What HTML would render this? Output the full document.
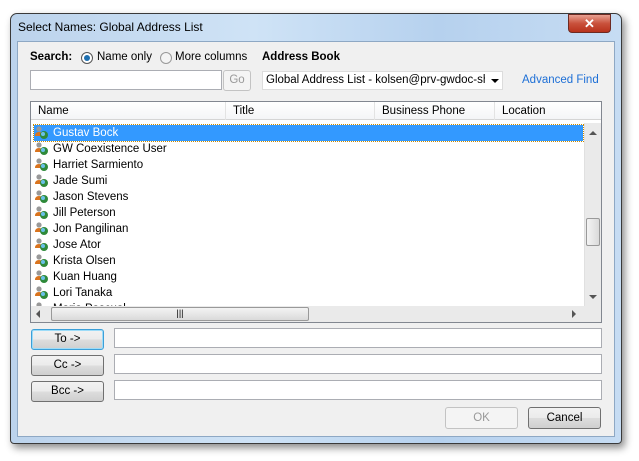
<!DOCTYPE html><html><head><style>
*{margin:0;padding:0;box-sizing:border-box}
body{width:639px;height:461px;background:#fff;font-family:"Liberation Sans",sans-serif;font-size:11.5px;color:#000;position:relative;overflow:hidden}
.a{position:absolute}
.win{left:10px;top:13px;width:612px;height:431px;border:1px solid #3a3a3a;border-radius:7px 7px 4px 4px;background:linear-gradient(90deg,#bcd3ec,#cfe3f6 40%,#b6d1ee 70%,#c6dcf3);box-shadow:3px 4px 8px rgba(0,0,0,.45)}
.client{left:17px;top:41px;width:598px;height:396px;background:#f0f0f0;border:1px solid #8ea8c4}
.tb{border:1px solid #abadb3;background:#fff}
.btn{border:1px solid #707070;border-radius:3px;background:linear-gradient(#f2f2f2,#ebebeb 50%,#dddddd 51%,#cfcfcf);text-align:center;line-height:19px}
.row{position:absolute;left:3px;height:16px;line-height:16px;padding-left:19px;width:548px}
.sel{background:#3399ff;color:#fff;outline:1px dotted #c98b00}
.hd{position:absolute;top:0;height:18px;line-height:18px;padding-left:7px;border-right:1px solid #e3e3e3}
</style></head><body>
<div class="a win"></div>
<div class="a" style="left:18px;top:20px;font-size:12px">Select Names: Global Address List</div>
<div class="a" style="left:568px;top:14px;width:43px;height:19px;border:1px solid #6d2a22;border-radius:0 0 4px 4px;background:linear-gradient(#e8a091,#c9513c 50%,#b8321c);color:#fff;text-align:center;font-weight:bold;font-size:13px;line-height:17px">✕</div>
<div class="a client"></div>
<div class="a" style="left:30px;top:51px;font-weight:bold">Search:</div>
<div class="a" style="left:81px;top:52px;width:12px;height:12px;border:1px solid #555;border-radius:50%;background:#fff"><div style="margin:2px;width:6px;height:6px;border-radius:50%;background:#1e6fb0"></div></div>
<div class="a" style="left:97px;top:51px">Name only</div>
<div class="a" style="left:160px;top:52px;width:12px;height:12px;border:1px solid #999;border-radius:50%;background:#f4f4f4"></div>
<div class="a" style="left:175px;top:51px">More columns</div>
<div class="a" style="left:262px;top:51px;font-weight:bold">Address Book</div>
<div class="a tb" style="left:30px;top:70px;width:192px;height:20px"></div>
<div class="a" style="left:223px;top:70px;width:28px;height:21px;border:1px solid #c3c3c3;border-radius:3px;background:#f4f4f4;color:#999;text-align:center;line-height:19px">Go</div>
<div class="a" style="left:262px;top:71px;width:241px;height:19px;border:1px solid #dcdcdc;background:#fff"><div style="width:222px;line-height:17px;padding-left:3px;white-space:nowrap;overflow:hidden">Global Address List - kolsen@prv-gwdoc-share</div></div>
<div class="a" style="left:491px;top:79px;width:0;height:0;border-left:4px solid transparent;border-right:4px solid transparent;border-top:4px solid #000"></div>
<div class="a" style="left:522px;top:74px;color:#1d6fd6">Advanced Find</div>
<div class="a" style="left:30px;top:101px;width:572px;height:222px;border:1px solid #828790;background:#fff;overflow:hidden">
<div class="a" style="left:0;top:0;width:570px;height:18px;background:linear-gradient(#fff,#f4f5f7);border-bottom:1px solid #d5d5d5">
<div class="hd" style="left:0;width:195px">Name</div><div class="hd" style="left:195px;width:149px">Title</div><div class="hd" style="left:344px;width:120px">Business Phone</div><div class="hd" style="left:464px;width:106px;border:0">Location</div></div>
<div class="row sel" style="top:23px;width:549px">Gustav Bock</div>
<div class="row" style="top:39px">GW Coexistence User</div>
<div class="row" style="top:55px">Harriet Sarmiento</div>
<div class="row" style="top:71px">Jade Sumi</div>
<div class="row" style="top:87px">Jason Stevens</div>
<div class="row" style="top:103px">Jill Peterson</div>
<div class="row" style="top:119px">Jon Pangilinan</div>
<div class="row" style="top:135px">Jose Ator</div>
<div class="row" style="top:151px">Krista Olsen</div>
<div class="row" style="top:167px">Kuan Huang</div>
<div class="row" style="top:183px">Lori Tanaka</div>
<div class="row" style="top:199px">Maria Pascual</div>
<svg class="a" style="left:3px;top:23px" width="16" height="181">
<g id="p"><circle cx="5" cy="4" r="2.6" fill="#999"/><path d="M1 11 Q1 7 5 7 Q9 7 9 11Z" fill="#d9741f"/><circle cx="10" cy="10" r="4" fill="#2f8a3a"/><circle cx="9" cy="9" r="2" fill="#6ac0e8"/></g>
<use href="#p" y="16"/><use href="#p" y="32"/><use href="#p" y="48"/><use href="#p" y="64"/><use href="#p" y="80"/><use href="#p" y="96"/><use href="#p" y="112"/><use href="#p" y="128"/><use href="#p" y="144"/><use href="#p" y="160"/><use href="#p" y="176"/>
</svg>
<div class="a" style="left:553px;top:21px;width:17px;height:183px;background:#eaeaea;border-left:1px solid #e0e0e0"><div class="a" style="left:4px;top:8px;border-left:4px solid transparent;border-right:4px solid transparent;border-bottom:4px solid #555"></div><div class="a" style="left:1px;top:95px;width:14px;height:28px;border:1px solid #999;border-radius:2px;background:linear-gradient(90deg,#f3f3f3,#dadada)"></div><div class="a" style="left:4px;top:172px;border-left:4px solid transparent;border-right:4px solid transparent;border-top:4px solid #555"></div></div>
<div class="a" style="left:0;top:204px;width:570px;height:16px;background:#eaeaea"><div class="a" style="left:5px;top:4px;border-top:4px solid transparent;border-bottom:4px solid transparent;border-right:4px solid #555"></div><div class="a" style="left:20px;top:1px;width:258px;height:14px;border:1px solid #999;border-radius:2px;background:linear-gradient(#f3f3f3,#dadada);text-align:center;font-size:9px;line-height:11px">|||</div><div class="a" style="left:541px;top:4px;border-top:4px solid transparent;border-bottom:4px solid transparent;border-left:4px solid #555"></div></div>
</div>
<div class="a btn" style="left:31px;top:329px;width:73px;height:21px;border-color:#3c9fd8;box-shadow:inset 0 0 0 1px #9ddcf8">To -&gt;</div>
<div class="a btn" style="left:31px;top:355px;width:73px;height:21px">Cc -&gt;</div>
<div class="a btn" style="left:31px;top:381px;width:73px;height:21px">Bcc -&gt;</div>
<div class="a tb" style="left:114px;top:328px;width:488px;height:20px"></div>
<div class="a tb" style="left:114px;top:354px;width:488px;height:20px"></div>
<div class="a tb" style="left:114px;top:380px;width:488px;height:20px"></div>
<div class="a" style="left:445px;top:407px;width:73px;height:22px;border:1px solid #c3c3c3;border-radius:3px;background:#f4f4f4;color:#999;text-align:center;line-height:20px">OK</div>
<div class="a btn" style="left:528px;top:407px;width:73px;height:22px;line-height:20px">Cancel</div>
</body></html>
